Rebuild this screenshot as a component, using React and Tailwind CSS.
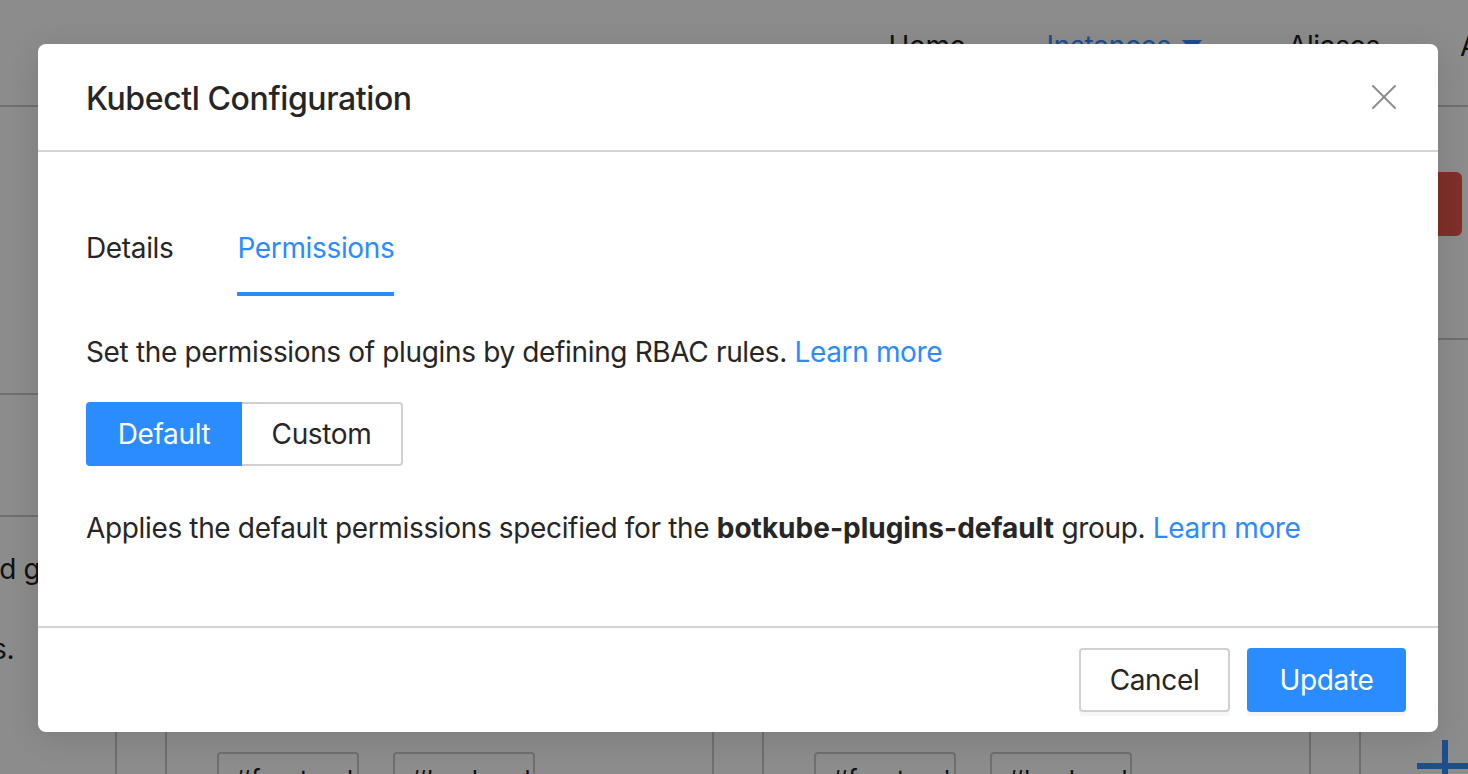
import { X } from "lucide-react";

const blue = "text-[#2b8cff]";

function BackgroundPage() {
  return (
    <div className="flex h-full w-full flex-col bg-white text-[#1f1f1f]">
      {/* top nav */}
      <header className="flex h-[107px] shrink-0 items-start justify-end border-b-2 border-[#cacaca] pt-[24px] text-[28px] leading-[44px]">
        <span>Home</span>
        <span className="ml-[81px] flex items-center gap-[10px] text-[#3590ff]">
          Instances
          <svg width="22" height="14" viewBox="0 0 22 14">
            <path d="M1 1h20L11 13z" fill="currentColor" />
          </svg>
        </span>
        <span className="ml-[85px]">Aliases</span>
        <span className="ml-[80px] w-[8px] overflow-hidden">Audit</span>
      </header>

      {/* middle */}
      <div className="flex h-[593px] shrink-0">
        <div className="w-[80px] shrink-0">
          <div className="h-[288px] border-b-2 border-[#cacaca]" />
          <div className="h-[122px] border-b-2 border-[#cacaca]" />
          <div className="-ml-[17px] mt-[30px] whitespace-nowrap text-[28px] leading-[44px]">
            nd group
          </div>
          <div className="-ml-[24px] mt-[36px] whitespace-nowrap text-[28px] leading-[44px]">
            es.
          </div>
        </div>
        <div className="flex-1" />
        <div className="w-[120px] shrink-0">
          <div className="h-[233px] border-b-2 border-[#cacaca] pt-[65px]">
            <div className="ml-auto mr-[6px] h-[64px] w-[100px] rounded-[6px] bg-[#ec574c]" />
          </div>
        </div>
      </div>

      {/* bottom cards */}
      <div className="flex flex-1 pl-[115px]">
        {[0, 1, 2].map((i) => (
          <div key={i} className="flex w-[597px] shrink-0">
            <div className="w-[50px] border-l-2 border-[#cacaca]" />
            <div className="flex flex-1 gap-[34px] border-l-2 border-[#cacaca] pl-[50px] pt-[52px]">
              {i < 2 ? (
                <>
                  <div className="h-[60px] w-[142px] rounded-[4px] border-2 border-[#cacaca] px-[16px] pt-[6px] text-[26px]">
                    #frontend
                  </div>
                  <div className="h-[60px] w-[142px] rounded-[4px] border-2 border-[#cacaca] px-[16px] pt-[6px] text-[26px]">
                    #backend
                  </div>
                </>
              ) : (
                <svg className="ml-[6px] mt-[-12px]" width="56" height="56" viewBox="0 0 56 56">
                  <path d="M28 0v56M0 26h56" stroke="#3590ff" strokeWidth="6" />
                </svg>
              )}
            </div>
          </div>
        ))}
      </div>
    </div>
  );
}

export default function App() {
  return (
    <div className="relative h-[774px] w-[1468px] overflow-hidden font-['Inter','Liberation_Sans',sans-serif] tracking-[-0.35px]">
      <BackgroundPage />

      {/* mask + modal */}
      <div className="absolute inset-0 bg-black/45">
        <div className="ml-[38px] mt-[44px] w-[1400px] rounded-[8px] bg-white text-[#262626] shadow-[0_6px_32px_rgba(0,0,0,0.12)]">
          <div className="flex h-[108px] items-center justify-between border-b-2 border-[#d3d3d3] pl-[48px] pr-[32px]">
            <h2 className="pt-[3px] text-[32px] font-medium leading-[44px] tracking-[-0.4px]">
              Kubectl Configuration
            </h2>
            <X className="text-[#8c8c8c]" size={44} strokeWidth={1.1} />
          </div>

          <div className="px-[48px] pt-[48px] pb-[48px]">
            <div className="flex gap-[64px] text-[28px] leading-[44px]">
              <div className="py-[26px]">Details</div>
              <div className={`border-b-4 border-[#2b8cff] pt-[26px] pb-[22px] ${blue}`}>
                Permissions
              </div>
            </div>

            <p className="mt-[34px] text-[28px] leading-[44px]">
              Set the permissions of plugins by defining RBAC rules.{" "}
              <span className={blue}>Learn more</span>
            </p>

            <div className="mt-[28px] flex h-[64px] text-[28px]">
              <button className="w-[156px] rounded-l-[4px] bg-[#2b8cff] text-white">Default</button>
              <button className="w-[161px] rounded-r-[4px] border-2 border-l-0 border-[#d0d0d0] text-[#262626]">
                Custom
              </button>
            </div>

            <p className="mt-[40px] mb-[28px] text-[28px] leading-[44px]">
              Applies the default permissions specified for the{" "}
              <b className="font-bold tracking-normal">botkube-plugins-default</b> group.{" "}
              <span className={blue}>Learn more</span>
            </p>
          </div>

          <div className="flex justify-end gap-[17px] border-t-2 border-[#d3d3d3] px-[32px] py-[20px] text-[28px]">
            <button className="h-[64px] w-[151px] rounded-[4px] border-2 border-[#d0d0d0] text-[#262626] shadow-[0_4px_0_rgba(0,0,0,0.03)]">
              Cancel
            </button>
            <button className="h-[64px] w-[159px] rounded-[4px] bg-[#2b8cff] text-white shadow-[0_4px_0_rgba(0,0,0,0.04)]">
              Update
            </button>
          </div>
        </div>
      </div>
    </div>
  );
}
